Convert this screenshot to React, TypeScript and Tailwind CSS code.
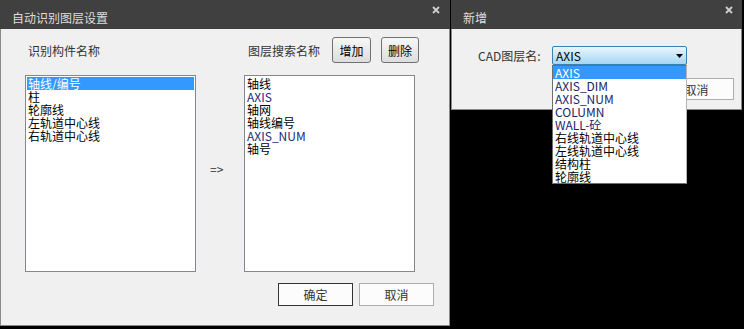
const font = "font-['Noto_Sans_CJK_SC','Noto_Sans',sans-serif]"

function CloseIcon() {
  return (
    <svg width="8" height="8" viewBox="0 0 8 8" className="shrink-0">
      <path d="M1 1L7 7M7 1L1 7" stroke="#cfcfcf" strokeWidth="1.8" />
    </svg>
  )
}

function TitleBar({ title, mr }: { title: string; mr: string }) {
  return (
    <div className="flex h-[29px] shrink-0 justify-between bg-[#404040]">
      <div className="flex items-center pl-[12px] pt-[5px] text-[12px] leading-[13px] text-[#dedede]">{title}</div>
      <div className={`mt-[6px] ${mr}`}>
        <CloseIcon />
      </div>
    </div>
  )
}

const leftItems = ["轴线/编号", "柱", "轮廓线", "左轨道中心线", "右轨道中心线"]

const searchItems = [
  { text: "轴线", latin: false },
  { text: "AXIS", latin: true },
  { text: "轴网", latin: false },
  { text: "轴线编号", latin: false },
  { text: "AXIS_NUM", latin: true },
  { text: "轴号", latin: false },
]

const layerOptions = [
  "AXIS",
  "AXIS_DIM",
  "AXIS_NUM",
  "COLUMN",
  "WALL-砼",
  "右线轨道中心线",
  "左线轨道中心线",
  "结构柱",
  "轮廓线",
]

function SmallButton({ label }: { label: string }) {
  return (
    <button className="flex h-[26px] w-full items-center justify-center rounded-[3px] border border-[#707070] bg-gradient-to-b from-[#f7f7f7] to-[#dddddd] text-[12px] leading-[13px] text-black">
      {label}
    </button>
  )
}

export default function App() {
  return (
    <div className={`flex h-[329px] w-[744px] items-start gap-[1px] overflow-hidden bg-black ${font}`}>
      {/* 自动识别图层设置 */}
      <div className="flex h-[326px] w-[450px] shrink-0 flex-col">
        <TitleBar title="自动识别图层设置" mr="mr-[10px]" />
        <div className="flex flex-1 flex-col border-x border-b border-[#8a8a8a] bg-[#f0f0f0]">
          {/* header */}
          <div className="mt-[8px] flex h-[26px] items-center text-[12px] leading-[13px] text-[#333]">
            <div className="w-[247px] pl-[27px]">识别构件名称</div>
            <div className="w-[84px]">图层搜索名称</div>
            <div className="w-[39px]">
              <SmallButton label="增加" />
            </div>
            <div className="ml-[10px] w-[38px]">
              <SmallButton label="删除" />
            </div>
          </div>

          {/* lists */}
          <div className="mt-[12px] flex pl-[24px]">
            <div className="h-[197px] w-[171px] border border-[#828790] bg-white p-[1px] text-[12px] leading-[13px] text-black">
              {leftItems.map((item, i) => (
                <div key={i} className={`pl-[1px] ${i === 0 ? "bg-[#3399ff] text-white" : ""}`}>
                  {item}
                </div>
              ))}
            </div>
            <div className="flex w-[48px] flex-col justify-center pb-[10px] pl-[14px] text-[12px] leading-[13px] text-[#333]">
              =&gt;
            </div>
            <div className="h-[197px] w-[171px] border border-[#828790] bg-white p-[1px] pl-[2px] text-[12px] leading-[13px]">
              {searchItems.map((item, i) => (
                <div key={i} className={item.latin ? "text-[#1a2b78]" : "text-black"}>
                  {item.text}
                </div>
              ))}
            </div>
          </div>

          {/* footer */}
          <div className="mt-[11px] flex gap-[6px] pl-[277px] text-[12px] leading-[13px] text-[#333]">
            <button className="h-[23px] w-[75px] border border-[#333] bg-[#fcfcfc]">确定</button>
            <button className="h-[23px] w-[75px] border border-[#adadad] bg-[#fcfcfc]">取消</button>
          </div>
        </div>
      </div>

      {/* 新增 */}
      <div className="flex h-[110px] w-[291px] shrink-0 flex-col">
        <TitleBar title="新增" mr="mr-[9px]" />
        <div className="flex flex-1 flex-col border-x border-b border-[#8a8a8a] bg-[#f0f0f0]">
          <div className="mt-[17px] flex h-[19px] items-center">
            <div className="w-[100px] pl-[26px] text-[12px] leading-[13px] text-[#333]">CAD图层名:</div>
            <div className="relative z-10 h-[19px] w-[135px]">
              <div className="flex h-full items-center justify-between rounded-[2px] border border-[#3c7fb1] bg-gradient-to-b from-[#eaf6fd] to-[#a3d6f3] pl-[3px] pr-[2px] text-[12px] leading-[13px] text-black">
                <span>AXIS</span>
                <svg width="7" height="4" viewBox="0 0 7 4" className="mr-[1px]">
                  <path d="M0 0H7L3.5 4Z" fill="#000" />
                </svg>
              </div>
              <div className="absolute left-0 top-full w-[135px] border border-[#6e6e6e] border-r-[#b5b5b5] bg-white text-[12px] leading-[13px]">
                {layerOptions.map((opt, i) => (
                  <div
                    key={i}
                    className={`pl-[2px] ${i === 0 ? "bg-[#3399ff] text-white" : /[A-Z]/.test(opt[0]) ? "text-[#1a2466]" : "text-black"}`}
                  >
                    {opt}
                  </div>
                ))}
              </div>
            </div>
          </div>
          <div className="mt-[13px] flex justify-end pr-[7px]">
            <button className="h-[22px] w-[75px] border border-[#adadad] bg-[#fcfcfc] text-[12px] leading-[13px] text-[#333]">取消</button>
          </div>
        </div>
      </div>
    </div>
  )
}
